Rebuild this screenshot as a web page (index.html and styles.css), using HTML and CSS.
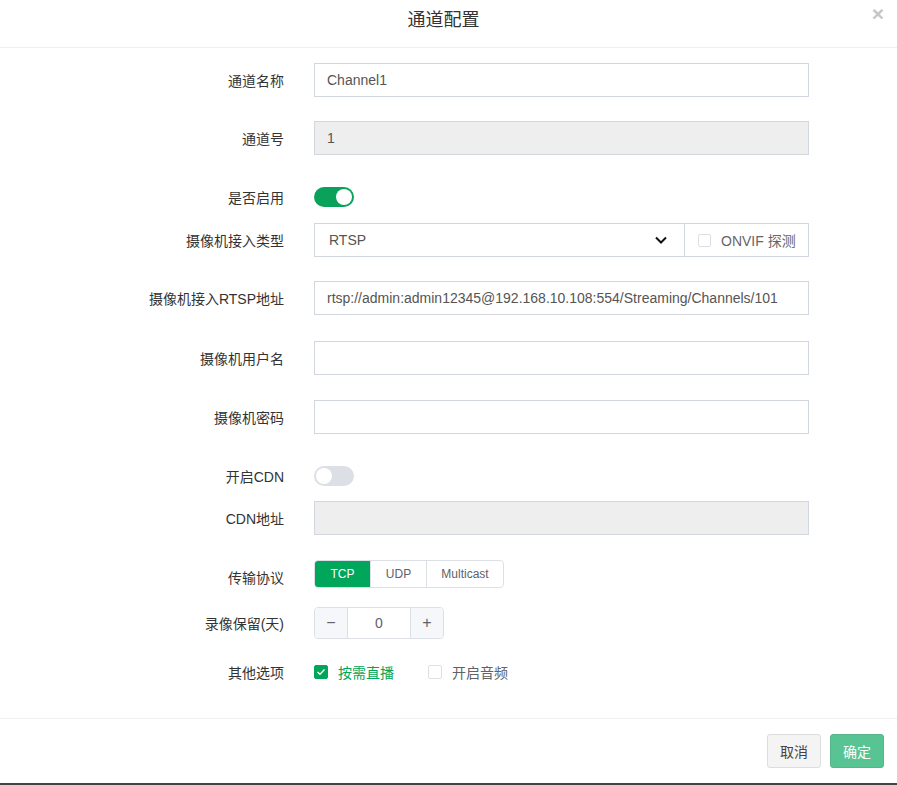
FILE: index.html
```html
<!DOCTYPE html>
<html lang="zh">
<head>
<meta charset="utf-8">
<title>通道配置</title>
<link rel="stylesheet" href="styles.css">
</head>
<body>
<div class="modal">
  <div class="modal-header">
    <h4 class="modal-title">通道配置</h4>
    <span class="close">×</span>
  </div>
  <div class="modal-body">
    <div class="row gap24">
      <label class="label">通道名称</label>
      <div class="control"><input class="input" type="text" value="Channel1"></div>
    </div>
    <div class="row gap25">
      <label class="label">通道号</label>
      <div class="control"><input class="input" type="text" value="1" disabled></div>
    </div>
    <div class="row gap9">
      <label class="label">是否启用</label>
      <div class="control"><span class="switch on"><span class="knob"></span></span></div>
    </div>
    <div class="row gap24">
      <label class="label">摄像机接入类型</label>
      <div class="control">
        <div class="select-group">
          <div class="select">
            <span>RTSP</span>
            <svg class="chev" width="14" height="10" viewBox="0 0 14 10"><path d="M2 2.5 L7 7.5 L12 2.5" fill="none" stroke="#111" stroke-width="2"/></svg>
          </div>
          <div class="addon"><span class="cb"></span><span class="addon-text">ONVIF 探测</span></div>
        </div>
      </div>
    </div>
    <div class="row gap26">
      <label class="label">摄像机接入RTSP地址</label>
      <div class="control"><input class="input" type="text" value="rtsp://admin:admin12345@192.168.10.108:554/Streaming/Channels/101"></div>
    </div>
    <div class="row gap25">
      <label class="label">摄像机用户名</label>
      <div class="control"><input class="input" type="text" value=""></div>
    </div>
    <div class="row gap25">
      <label class="label">摄像机密码</label>
      <div class="control"><input class="input" type="password" value=""></div>
    </div>
    <div class="row gap8">
      <label class="label">开启CDN</label>
      <div class="control"><span class="switch"><span class="knob"></span></span></div>
    </div>
    <div class="row gap24">
      <label class="label">CDN地址</label>
      <div class="control"><input class="input" type="text" value="" disabled></div>
    </div>
    <div class="row gap13">
      <label class="label lower">传输协议</label>
      <div class="control">
        <div class="radio-group">
          <span class="rbtn active w55">TCP</span><span class="rbtn w56">UDP</span><span class="rbtn w78">Multicast</span>
        </div>
      </div>
    </div>
    <div class="row gap15">
      <label class="label">录像保留(天)</label>
      <div class="control">
        <div class="number">
          <span class="nbtn">−</span><span class="nval">0</span><span class="nbtn">+</span>
        </div>
      </div>
    </div>
    <div class="row">
      <label class="label">其他选项</label>
      <div class="control checks">
        <span class="check checked"><span class="cbox"><svg width="10" height="8" viewBox="0 0 10 8"><path d="M1.5 4 L4 6.3 L8.5 1.5" fill="none" stroke="#fff" stroke-width="1.4"/></svg></span><span class="ctext">按需直播</span></span>
        <span class="check"><span class="cbox"></span><span class="ctext">开启音频</span></span>
      </div>
    </div>
  </div>
  <div class="modal-footer">
    <button class="btn btn-default">取消</button>
    <button class="btn btn-primary" disabled>确定</button>
  </div>
</div>
<div class="underlay"></div>
</body>
</html>
```
FILE: styles.css
```css
* { box-sizing: border-box; }
html, body { margin: 0; padding: 0; background: #fff; }
body {
  font-family: "Liberation Sans", "Noto Sans CJK SC", sans-serif;
  font-size: 14px;
  color: #333;
  width: 897px;
  height: 785px;
  overflow: hidden;
}
.modal { position: relative; background: #fff; }
.modal-header {
  height: 48px;
  border-bottom: 1px solid #f0f0f0;
  padding: 9px 10px 0 0;
  text-align: center;
}
.modal-title {
  margin: 0;
  font-size: 18px;
  font-weight: normal;
  line-height: 22px;
  color: #333;
}
.close {
  position: absolute;
  right: 13px;
  top: 2px;
  font-size: 21px;
  font-weight: bold;
  color: #c6c6c6;
  line-height: 24px;
}
.modal-body { padding: 15px 0 29px; }
.row {
  display: flex;
  align-items: center;
  height: 34px;
  margin-bottom: 0;
}
.row.gap24 { margin-bottom: 24px; }
.row.gap26 { margin-bottom: 26px; }
.row.gap25 { margin-bottom: 25px; }
.row.gap15 { margin-bottom: 15px; }
.row.gap13 { margin-bottom: 13px; }
.row.gap9 { margin-bottom: 9px; }
.row.gap8 { margin-bottom: 8px; }
.label {
  width: 285px;
  padding-right: 1px;
  text-align: right;
  color: #333;
  font-size: 14px;
}
.label.lower { position: relative; top: 1px; }
.control { margin-left: 29px; width: 495px; }
.input {
  width: 495px;
  height: 34px;
  border: 1px solid #d2d6de;
  padding: 0 12px;
  font-family: inherit;
  font-size: 14px;
  color: #555;
  background: #fff;
  outline: none;
}
.input:disabled { background: #eee; color: #555; }
.switch {
  position: relative;
  display: block;
  width: 40px;
  height: 20px;
  border-radius: 10px;
  background: #dcdfe6;
}
.switch.on { background: #0aa15a; }
.knob {
  position: absolute;
  top: 2px;
  left: 2px;
  width: 16px;
  height: 16px;
  border-radius: 50%;
  background: #fff;
}
.switch.on .knob { left: 22px; }
.select-group { display: flex; height: 34px; border: 1px solid #d2d6de; }
.select {
  width: 369px;
  display: flex;
  align-items: center;
  justify-content: space-between;
  padding: 0 16px 0 14px;
  color: #555;
}
.chev { display: block; }
.addon {
  flex: 1;
  display: flex;
  align-items: center;
  border-left: 1px solid #d2d6de;
  padding-left: 13px;
}
.cb {
  width: 13px;
  height: 13px;
  border: 1px solid #dcdfe6;
  border-radius: 2px;
  margin-right: 10px;
}
.addon-text { color: #666; }
.radio-group {
  display: inline-flex;
  height: 28px;
  border: 1px solid #dcdfe6;
  border-radius: 4px;
  overflow: hidden;
  margin-top: -6px;
}
.rbtn {
  display: flex;
  align-items: center;
  justify-content: center;
  font-size: 12px;
  color: #606266;
  border-left: 1px solid #dcdfe6;
}
.rbtn:first-child { border-left: none; }
.rbtn.active { background: #00a65a; color: #fff; }
.w55 { width: 55px; }
.w56 { width: 56px; }
.w78 { width: 77px; }
.number {
  display: inline-flex;
  height: 32px;
  border: 1px solid #dcdfe6;
  border-radius: 4px;
  overflow: hidden;
}
.nbtn {
  width: 32px;
  display: flex;
  align-items: center;
  justify-content: center;
  background: #f5f7fa;
  color: #606266;
  font-size: 16px;
}
.nval {
  width: 64px;
  display: flex;
  align-items: center;
  justify-content: center;
  border-left: 1px solid #dcdfe6;
  border-right: 1px solid #dcdfe6;
  color: #606266;
  font-size: 14px;
}
.checks { display: flex; align-items: center; }
.check { display: inline-flex; align-items: center; margin-right: 34px; }
.cbox {
  width: 14px;
  height: 14px;
  border: 1px solid #dcdfe6;
  border-radius: 2px;
  display: flex;
  align-items: center;
  justify-content: center;
  margin-right: 10px;
  background: #fff;
}
.check.checked .cbox { background: #00a65a; border-color: #00a65a; }
.ctext { color: #606266; }
.check.checked .ctext { color: #00a65a; }
.modal-footer {
  border-top: 1px solid #f0f0f0;
  padding: 15px 13px 15px 0;
  display: flex;
  justify-content: flex-end;
  gap: 9px;
}
.btn {
  height: 34px;
  width: 54px;
  border-radius: 3px;
  font-family: inherit;
  font-size: 14px;
  padding: 0;
}
.btn-default { background: #f4f4f4; border: 1px solid #ddd; color: #444; }
.btn-primary { background: #00a65a; border: 1px solid #008d4c; color: #fff; opacity: .65; }
.underlay { height: 4px; background: #444; }
```
